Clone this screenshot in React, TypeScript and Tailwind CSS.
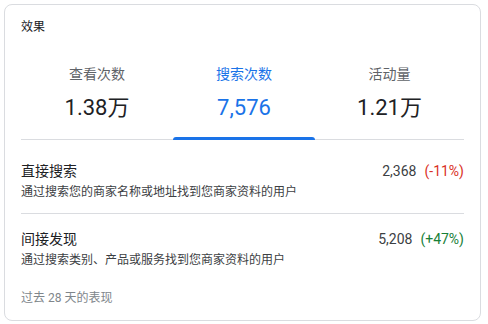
import React from "react"

interface Tab {
  label: string
  value: string
  active?: boolean
  width: string
}

interface Row {
  title: string
  desc: string
  value: string
  change: string
  up: boolean
}

const tabs: Tab[] = [
  { label: "查看次数", value: "1.38万", width: "w-[152px]" },
  { label: "搜索次数", value: "7,576", active: true, width: "w-[142px]" },
  { label: "活动量", value: "1.21万", width: "flex-1" },
]

const rows: Row[] = [
  {
    title: "直接搜索",
    desc: "通过搜索您的商家名称或地址找到您商家资料的用户",
    value: "2,368",
    change: "(-11%)",
    up: false,
  },
  {
    title: "间接发现",
    desc: "通过搜索类别、产品或服务找到您商家资料的用户",
    value: "5,208",
    change: "(+47%)",
    up: true,
  },
]

export default function App() {
  return (
    <div className="pl-[4px] pt-[4px] bg-white min-h-screen font-[Roboto,'Noto_Sans_CJK_SC',sans-serif]">
      <div className="w-[477px] h-[317px] rounded-[8px] border border-[#dadce0] bg-white px-[16px]">
        {/* Header */}
        <div className="pt-[14px] text-[12px] leading-[16px] text-[#202124]">效果</div>

        {/* Tabs */}
        <div className="flex border-b border-[#dadce0]">
          {tabs.map((tab) => (
            <div key={tab.label} className={`${tab.width} flex flex-col items-center pt-[29px]`}>
              <div
                className={`text-[14px] leading-[20px] ${tab.active ? "text-[#1a73e8]" : "text-[#5f6368]"}`}
              >
                {tab.label}
              </div>
              <div
                className={`mt-[10px] text-[22px] leading-[28px] ${tab.active ? "text-[#1a73e8]" : "text-[#202124]"}`}
              >
                {tab.value}
              </div>
              <div
                className={`mt-[15px] mb-[-1px] h-[3px] w-full rounded-t-[3px] ${tab.active ? "bg-[#1a73e8]" : "bg-transparent"}`}
              />
            </div>
          ))}
        </div>

        {/* Breakdown rows */}
        {rows.map((row, i) => (
          <div
            key={row.title}
            className={i === 0 ? "pt-[21px] pb-[13px] border-b border-[#dadce0]" : "pt-[15px]"}
          >
            <div className="flex items-center justify-between text-[14px] leading-[20px]">
              <span className="text-[#202124]">{row.title}</span>
              <span className="text-[#3c4043]">
                {row.value}
                <span className={`ml-[8px] ${row.up ? "text-[#188038]" : "text-[#d93025]"}`}>
                  {row.change}
                </span>
              </span>
            </div>
            <div className="mt-[3px] text-[12px] leading-[16px] text-[#3c4043]">{row.desc}</div>
          </div>
        ))}

        <div className="pt-[22px] text-[12px] leading-[16px] text-[#80868b]">过去 28 天的表现</div>
      </div>
    </div>
  )
}
